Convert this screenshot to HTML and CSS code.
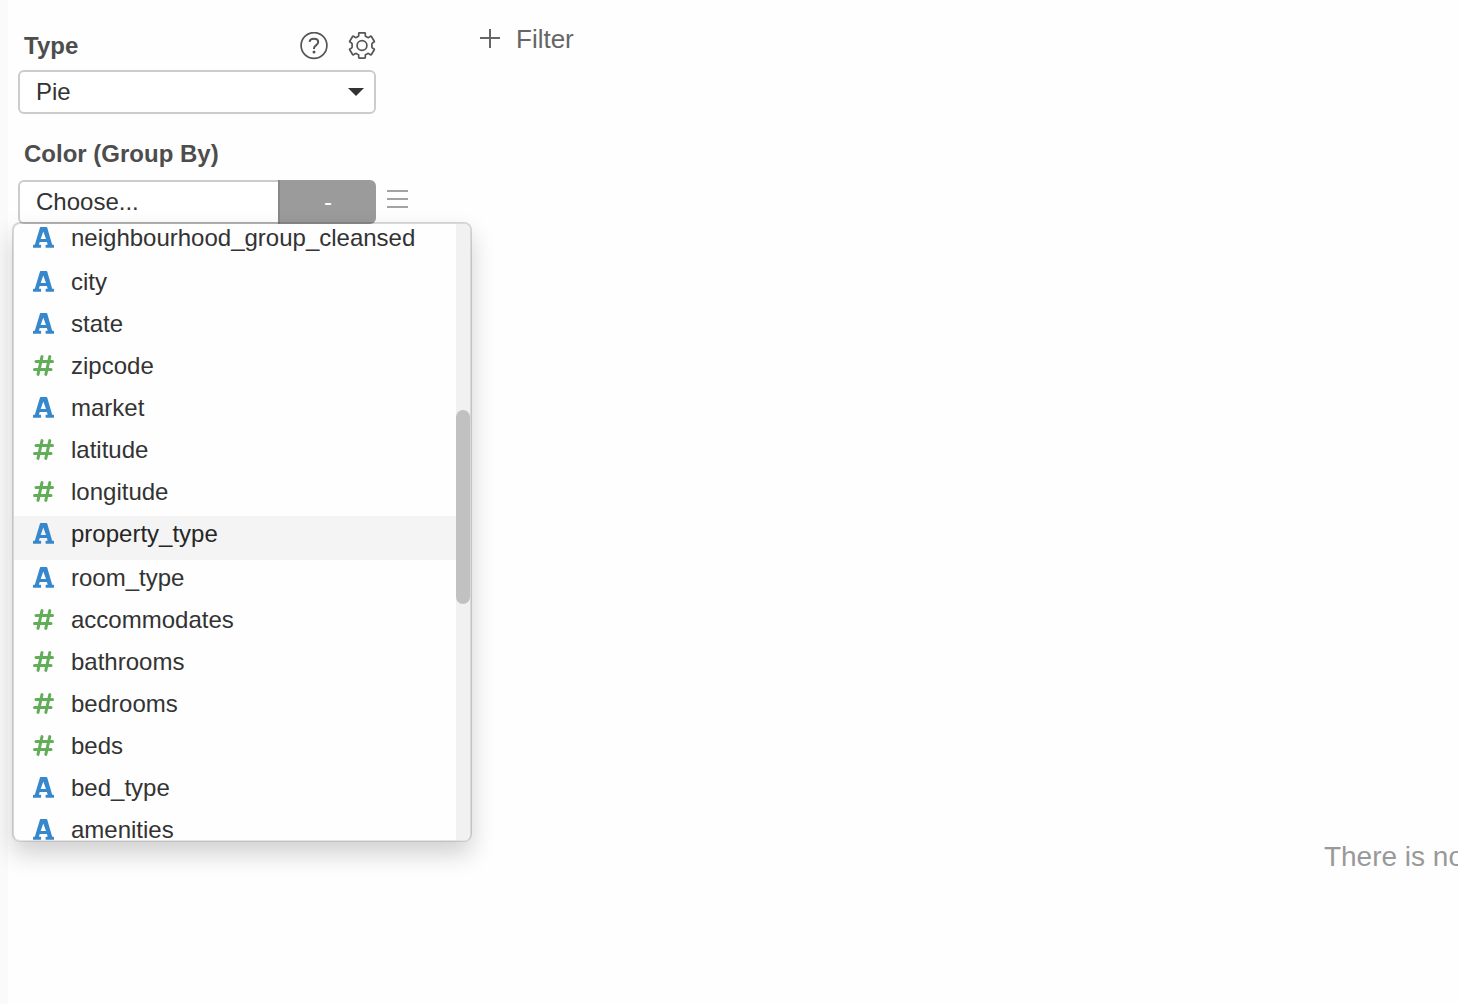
FILE: index.html
```
<!DOCTYPE html>
<html lang="en">
<head>
<meta charset="utf-8">
<meta name="viewport" content="width=device-width, initial-scale=1">
<title>Chart</title>
<link rel="stylesheet" href="styles.css">
</head>
<body>
<svg class="sprite" aria-hidden="true">
  <symbol id="text-type" viewBox="0 0 21 21">
    <path fill="currentColor" fill-rule="evenodd" d="M7.600 0h5.800q.6 0 .8.600L19.200 17.800h1.200q.6 0 .6.600v1.800q0 .6-.6.600h-7.200q-.6 0-.6-.6v-1.800q0-.6.6-.6h1.500l-.8-2.900H6.700l-.8 2.900h1.600q.6 0 .6.600v1.800q0 .6-.6.600H.6q-.6 0-.6-.6v-1.800q0-.6.6-.6h1.200L7 .6q.1-.6.6-.6ZM10.300 4.600 7.700 12h5.300Z"/>
  </symbol>
  <symbol id="number-type" viewBox="0 0 21 21">
    <path fill="none" stroke="currentColor" stroke-width="3" stroke-linecap="round" d="M9 1.600 5 19.400M16.800 1.600 12.800 19.400M3 6.400h16.500M1.500 14.600H18"/>
  </symbol>
</svg>
<div class="app">
  <aside class="sidebar">
    <div class="field-head">
      <label class="field-label" for="chart-type">Type</label>
      <div class="tools">
        <button class="icon-button" type="button" aria-label="Help">
          <svg width="28" height="28" viewBox="0 0 28 28" fill="none" stroke="currentColor">
            <circle cx="14" cy="13.500" r="12.900" stroke-width="1.700"/>
            <path d="M9.600 9.800c.2-2 1.900-3.100 4.300-3.100 2.500 0 4.300 1.300 4.300 3.400 0 1.600-.9 2.400-2.200 3.300-1.500 1-2 1.500-2 3v.6" stroke-width="2"/>
            <circle cx="14" cy="20.100" r="1.500" fill="currentColor" stroke="none"/>
          </svg>
        </button>
        <button class="icon-button" type="button" aria-label="Settings">
          <svg width="28" height="28" viewBox="0 0 28 28" fill="none" stroke="currentColor" stroke-width="1.700" stroke-linejoin="round">
            <path d="M11.300.9h5.400q.6 0 .6.600v2.200q0 .6.600.8l1.500.8q.6.400 1.100.1l2-1.100q.6-.3.900.200l2.900 4.800q.3.500-.2.800l-1.700 1q-.5.400-.5 1v2.800q0 .6.500 1l1.700 1q.5.300.2.800l-2.900 4.800q-.3.500-.9.200l-2-1.100q-.5-.3-1.100.1l-1.500.8q-.6.200-.6.800v2.200q0 .6-.6.600h-5.400q-.6 0-.6-.6v-2.200q0-.6-.6-.8l-1.500-.8q-.6-.4-1.100-.1l-2 1.100q-.6.300-.9-.2l-2.900-4.800q-.3-.5.200-.8l1.700-1q.5-.4.500-1v-2.800q0-.6-.5-1l-1.700-1q-.5-.3-.2-.8l2.900-4.800q.3-.5.900-.2l2 1.100q.5.300 1.100-.1l1.500-.8q.6-.2.600-.8V1.500q0-.6.600-.6Z"/>
            <circle cx="14" cy="13.500" r="4.900"/>
          </svg>
        </button>
      </div>
    </div>
    <div class="select-wrap">
      <select class="select" id="chart-type"><option>Pie</option></select>
      <svg class="caret" width="16" height="8" viewBox="0 0 16 8" aria-hidden="true"><path fill="#333" d="M0 0h16L8 8Z"/></svg>
    </div>

    <div class="field-head second">
      <label class="field-label" for="group-by">Color (Group By)</label>
    </div>
    <div class="group-row">
      <select class="select column-select" id="group-by"><option>Choose...</option></select>
      <button class="function-button" type="button">-</button>
      <button class="menu-button" type="button" aria-label="Color options">
        <svg width="21" height="18" viewBox="0 0 21 18" stroke="#a3a3a3" stroke-width="2"><path d="M0 1h21M0 9h21M0 17h21"/></svg>
      </button>
      <div class="dropdown">
        <ul class="columns" role="listbox" aria-label="Columns">
          <li class="column tall" role="option"><svg class="type text"><use href="#text-type"/></svg>neighbourhood_group_cleansed</li>
          <li class="column" role="option"><svg class="type text"><use href="#text-type"/></svg>city</li>
          <li class="column" role="option"><svg class="type text"><use href="#text-type"/></svg>state</li>
          <li class="column" role="option"><svg class="type number"><use href="#number-type"/></svg>zipcode</li>
          <li class="column" role="option"><svg class="type text"><use href="#text-type"/></svg>market</li>
          <li class="column" role="option"><svg class="type number"><use href="#number-type"/></svg>latitude</li>
          <li class="column" role="option"><svg class="type number"><use href="#number-type"/></svg>longitude</li>
          <li class="column tall active" role="option" aria-selected="true"><svg class="type text"><use href="#text-type"/></svg>property_type</li>
          <li class="column" role="option"><svg class="type text"><use href="#text-type"/></svg>room_type</li>
          <li class="column" role="option"><svg class="type number"><use href="#number-type"/></svg>accommodates</li>
          <li class="column" role="option"><svg class="type number"><use href="#number-type"/></svg>bathrooms</li>
          <li class="column" role="option"><svg class="type number"><use href="#number-type"/></svg>bedrooms</li>
          <li class="column" role="option"><svg class="type number"><use href="#number-type"/></svg>beds</li>
          <li class="column" role="option"><svg class="type text"><use href="#text-type"/></svg>bed_type</li>
          <li class="column" role="option"><svg class="type text"><use href="#text-type"/></svg>amenities</li>
        </ul>
        <div class="scrollbar"><div class="thumb"></div></div>
      </div>
    </div>
  </aside>
  <main class="main">
    <button class="filter-button" type="button">
      <svg width="20" height="20" viewBox="0 0 20 20" stroke="currentColor" stroke-width="2" aria-hidden="true"><path d="M0 9h20M10 0v19"/></svg>
      Filter
    </button>
    <p class="message">There is no</p>
  </main>
</div>
</body>
</html>
```
FILE: styles.css
```
* { box-sizing: border-box; }

body {
  margin: 0;
  background: #fefefe;
  color: #333;
  font: 24px/28px "Liberation Sans", Arial, sans-serif;
}

button, select { font: inherit; color: inherit; margin: 0; }

button { padding: 0; border: 0; background: none; cursor: pointer; }

svg { display: block; }

.sprite { position: absolute; width: 0; height: 0; }

.app {
  display: flex;
  min-height: 100vh;
  overflow: hidden;
}

.sidebar {
  flex: none;
  width: 472px;
  padding: 28px 60px 0 10px;
  border-left: 8px solid #fafafa;
}

.field-head {
  display: flex;
  align-items: center;
  justify-content: space-between;
  width: 358px;
  height: 36px;
  margin-bottom: 6px;
  padding-left: 6px;
  color: #4d4d4d;
}

.second { margin: 22px 0 8px; }

.field-label { font-weight: bold; }

.tools { display: flex; gap: 20px; }

.icon-button { color: #555; }

.select-wrap {
  display: grid;
  align-items: center;
  width: 358px;
}

.select-wrap > * { grid-area: 1 / 1; }

.select {
  appearance: none;
  width: 100%;
  height: 44px;
  padding: 0 16px;
  border: 2px solid #ccc;
  border-radius: 6px;
  background: #fff;
}

.caret {
  justify-self: end;
  margin-right: 12px;
  pointer-events: none;
}

.group-row {
  position: relative;
  display: flex;
}

.column-select {
  width: 260px;
  border-right: 0;
  border-radius: 6px 0 0 6px;
}

.function-button {
  width: 98px;
  height: 44px;
  border-left: 2px solid #888;
  border-radius: 0 6px 6px 0;
  background: #9b9b9b;
  color: #fff;
}

.menu-button { height: 38px; margin-left: 11px; }

.dropdown {
  position: absolute;
  top: 42px;
  left: -6px;
  display: flex;
  width: 460px;
  height: 620px;
  overflow: hidden;
  border: 2px solid rgba(0, 0, 0, 0.15);
  border-bottom-color: rgba(0, 0, 0, 0.1);
  border-radius: 8px;
  background: #fefefe;
  background-clip: padding-box;
  box-shadow: 0 12px 24px rgba(0, 0, 0, 0.18);
}

.columns {
  flex: 1;
  margin: -4px 0 0;
  padding: 0;
  list-style: none;
}

.column {
  display: flex;
  align-items: flex-start;
  gap: 17px;
  height: 42px;
  padding: 4px 0 0 19px;
}

.tall { height: 44px; }

.active { background: #f4f4f4; color: #262626; }

.type { flex: none; width: 21px; height: 21px; margin-top: 3px; }

.text { color: #3787cd; }

.number { color: #62ad58; }

.scrollbar {
  width: 14px;
  padding-top: 186px;
  background: #f1f1f1;
}

.thumb { height: 194px; border-radius: 7px; background: #c1c1c1; }

.main {
  flex: 1;
  min-width: 0;
  padding: 24px 0 0 8px;
}

.filter-button {
  display: flex;
  align-items: center;
  gap: 16px;
  color: #666;
  font-size: 26px;
  line-height: 30px;
}

.message {
  margin: 786px -6px 0 0;
  color: #999;
  font-size: 28px;
  line-height: 34px;
  text-align: right;
  white-space: nowrap;
}
```
